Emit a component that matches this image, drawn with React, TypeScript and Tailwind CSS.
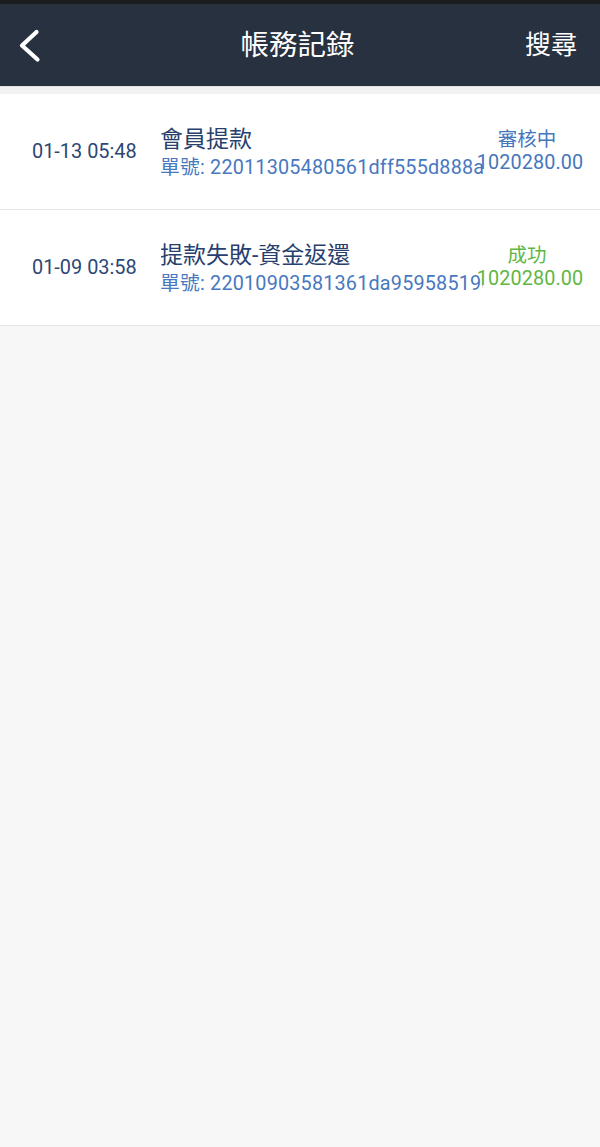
const FONT = { fontFamily: 'Roboto, "Noto Sans CJK TC", "Noto Sans", sans-serif' };

type Record = {
  time: string;
  title: string;
  orderNo: string;
  status: string;
  amount: string;
  ok: boolean;
};

const RECORDS: Record[] = [
  {
    time: "01-13 05:48",
    title: "會員提款",
    orderNo: "22011305480561dff555d888a8c2",
    status: "審核中",
    amount: "1020280.00",
    ok: false,
  },
  {
    time: "01-09 03:58",
    title: "提款失敗-資金返還",
    orderNo: "22010903581361da959585190c4e",
    status: "成功",
    amount: "1020280.00",
    ok: true,
  },
];

function BackIcon() {
  return (
    <svg width="30" height="40" viewBox="0 0 30 40" fill="none">
      <path
        d="M22.5 6 L8 19.5 L23.5 33.5"
        stroke="#ffffff"
        strokeWidth="4.2"
        strokeLinecap="round"
        strokeLinejoin="round"
      />
    </svg>
  );
}

function RecordRow({ r }: { r: Record }) {
  const tone = r.ok ? "text-[#5fb743]" : "text-[#4677bd]";
  return (
    <div className="flex h-[116px] items-center border-b border-[#e4e4e4] bg-white pl-[32px] pr-[29px]">
      <div className="w-[129px] shrink-0 text-[19.9px] leading-[26px] text-[#2d4775]">
        {r.time}
      </div>
      <div className="flex min-w-0 flex-1 flex-col overflow-hidden pt-[5px]">
        <div className="-ml-[1px] whitespace-nowrap text-[23px] leading-[28px] text-[#28406d]">
          {r.title}
        </div>
        <div className="-ml-[1px] whitespace-nowrap text-[19.8px] leading-[28px] tracking-[0.2px] text-[#4878c0]">
          單號: {r.orderNo}
        </div>
      </div>
      <div className={`-mt-[2px] flex w-[88px] shrink-0 flex-col items-center ${tone}`}>
        <div className="whitespace-nowrap text-[19.5px] leading-[23px]">{r.status}</div>
        <div className="ml-[6px] whitespace-nowrap text-[19.8px] leading-[23px] tracking-[0.1px]">
          {r.amount}
        </div>
      </div>
    </div>
  );
}

export default function App() {
  return (
    <div className="flex h-[1147px] w-[600px] flex-col bg-[#f7f7f7]" style={FONT}>
      <div className="h-[4px] bg-[#1b1c1e]" />
      <header className="relative flex h-[82px] items-center justify-center bg-[#283140] text-white">
        <button className="absolute left-[14px] top-[22px] flex items-center">
          <BackIcon />
        </button>
        <h1 className="mr-[5px] mt-[2px] text-[28.5px] font-normal leading-none">帳務記錄</h1>
        <button className="absolute right-[23px] top-[28px] text-[26px] leading-none">
          搜尋
        </button>
      </header>
      <div className="h-[1px] bg-[#e2e2e2]" />
      <div className="h-[7px] bg-[#f2f2f2]" />
      <div className="flex flex-col">
        {RECORDS.map((r) => (
          <RecordRow key={r.time} r={r} />
        ))}
      </div>
    </div>
  );
}
